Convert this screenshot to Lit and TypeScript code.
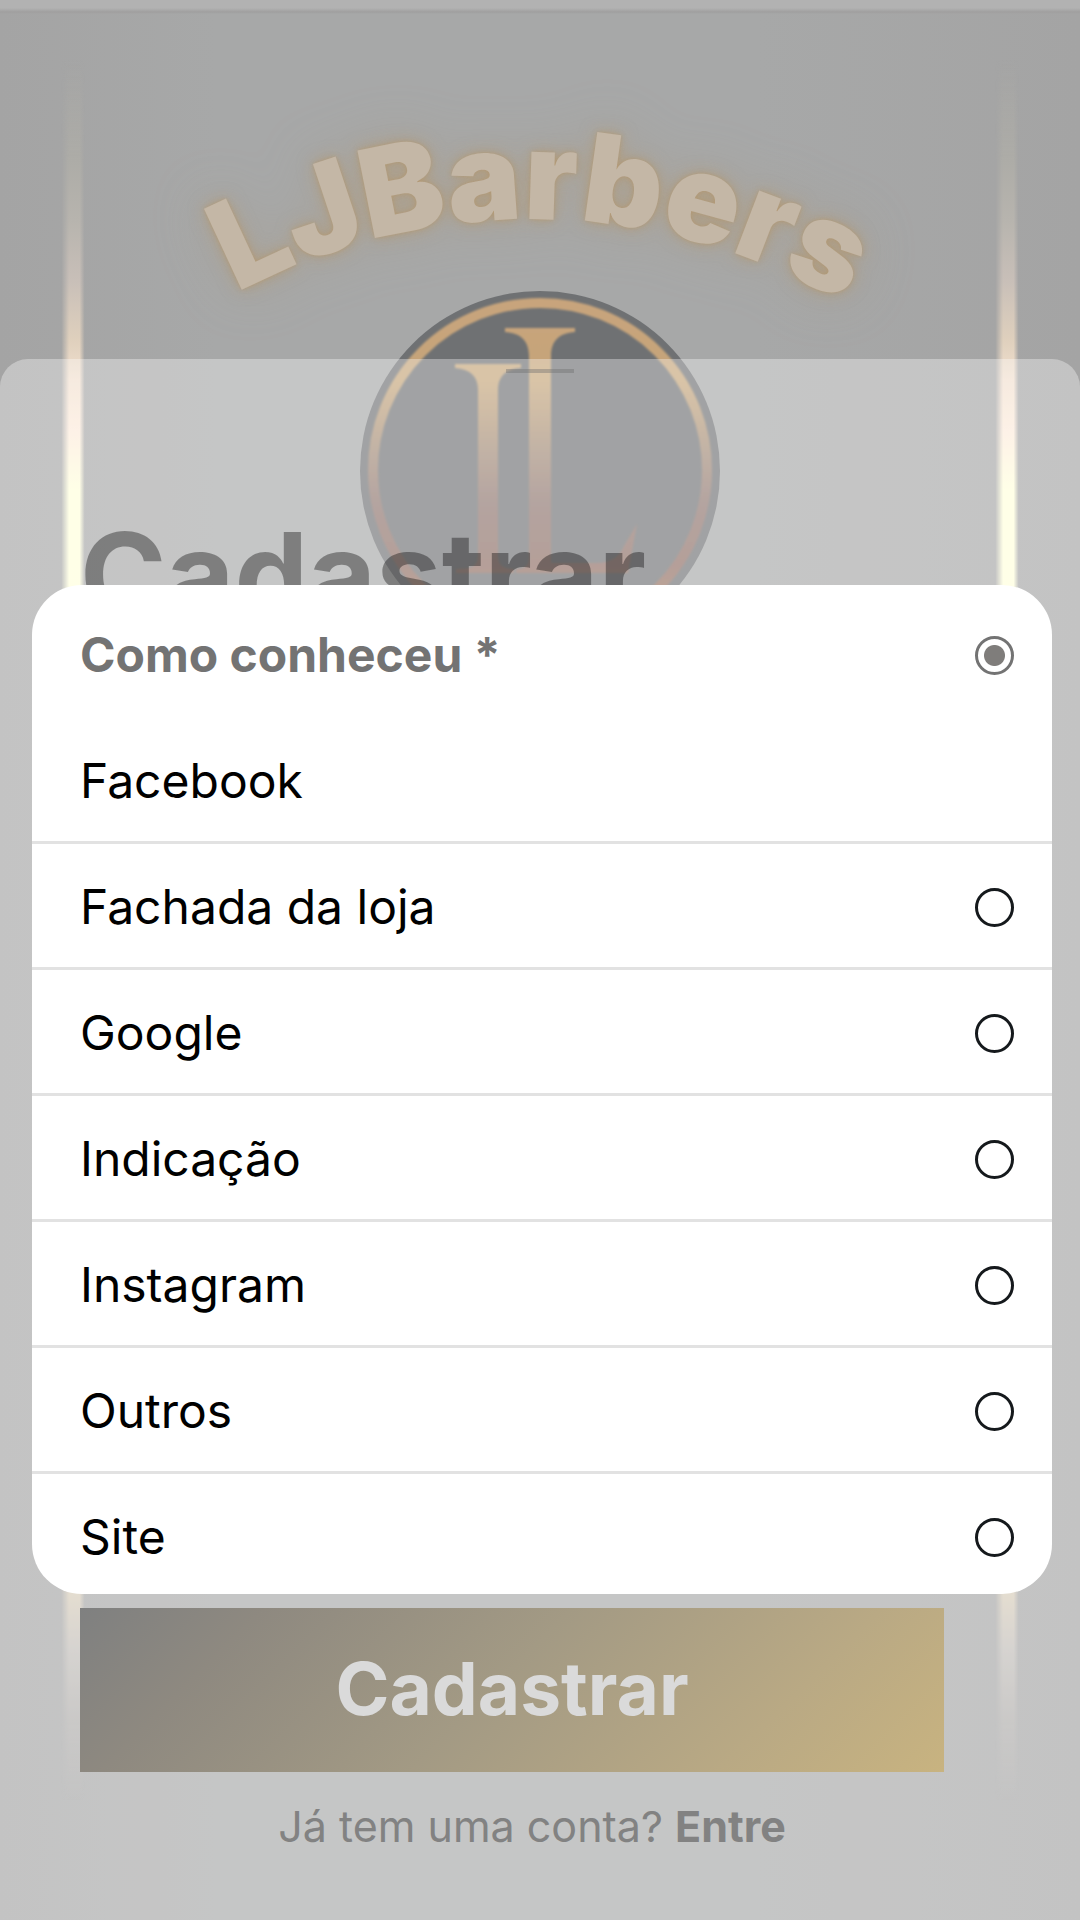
import { LitElement, html, css, svg } from "lit";
import { customElement, state } from "lit/decorators.js";

interface Option {
  id: string;
  label: string;
  radio: boolean;
}

const OPTIONS: Option[] = [
  { id: "facebook", label: "Facebook", radio: false },
  { id: "fachada", label: "Fachada da loja", radio: true },
  { id: "google", label: "Google", radio: true },
  { id: "indicacao", label: "Indicação", radio: true },
  { id: "instagram", label: "Instagram", radio: true },
  { id: "outros", label: "Outros", radio: true },
  { id: "site", label: "Site", radio: true },
];

@customElement("brand-mark")
export class BrandMark extends LitElement {
  static styles = css`
    :host {
      display: block;
    }
    .art {
      display: block;
      width: 100%;
      height: auto;
    }
    .name {
      font-family: "Inter", "Liberation Sans", sans-serif;
      font-weight: 900;
      font-size: 123px;
      fill: #c4b7a6;
      filter: drop-shadow(0 0 2px rgba(184, 147, 95, 0.5)) drop-shadow(0 0 8px rgba(184, 147, 95, 0.5))
        drop-shadow(0 0 26px rgba(172, 155, 130, 0.4));
    }
  `;

  render() {
    return html`
      <svg class="art" viewBox="0 0 1080 660" role="img" aria-label="LJBarbers">
        ${svg`
        <defs>
          <path id="arc" d="M237 293 A624 624 0 0 1 900 340" />
          <linearGradient id="copper" gradientUnits="userSpaceOnUse" x1="0" y1="300" x2="0" y2="640">
            <stop offset="0" stop-color="#c8a47c" />
            <stop offset="0.24" stop-color="#c5a579" />
            <stop offset="0.44" stop-color="#a28a75" />
            <stop offset="0.6" stop-color="#8c736d" />
            <stop offset="0.78" stop-color="#8e6c63" />
            <stop offset="1" stop-color="#a97a5c" />
          </linearGradient>
          <filter id="soft" x="-10%" y="-10%" width="120%" height="120%">
            <feGaussianBlur stdDeviation="0.8" />
          </filter>
        </defs>
        <text class="name"><textPath href="#arc">LJBarbers</textPath></text>
        <circle cx="540" cy="471" r="180" fill="#6f7173" />
        <g filter="url(#soft)">
          <circle cx="540" cy="470" r="167" fill="none" stroke="url(#copper)" stroke-width="10" />
          <path fill="url(#copper)" d="M505 328 H575 V332 C560 333 551 340 551 356 V563 H596 C612 563 620 556 624 546 L637 524 L628 573 H516 V569 C525 569 529 565 529 558 V356 C529 340 520 333 505 332 Z" />
          <path fill="url(#copper)" d="M455 364 H521 V368 C506 369 498 376 498 390 V556 C498 566 504 569 514 569 V573 H456 V569 C472 569 478 566 478 556 V390 C478 376 470 369 455 368 Z" />
        </g>
        `}
      </svg>
    `;
  }
}

@customElement("source-picker")
export class SourcePicker extends LitElement {
  static styles = css`
    :host {
      display: block;
      font-family: "Inter", "Liberation Sans", sans-serif;
    }
    .card {
      box-sizing: border-box;
      margin: 0;
      padding: 7px 0 0;
      border: 0;
      border-radius: 50px;
      background: #fff;
      overflow: hidden;
    }
    .row {
      display: flex;
      align-items: center;
      justify-content: space-between;
      box-sizing: border-box;
      padding: 30px 38px 30px 48px;
      font-size: 48px;
      line-height: 66px;
      color: #000;
    }
    .row.ruled {
      padding-bottom: 27px;
      border-bottom: 3px solid #e2e2e2;
    }
    .row:last-child {
      padding-bottom: 24px;
    }
    .row.heading {
      color: #737373;
      font-weight: 700;
    }
    .radio {
      appearance: none;
      box-sizing: border-box;
      flex: none;
      width: 39px;
      height: 39px;
      margin: 0;
      border: 3px solid #15191c;
      border-radius: 50%;
      background: #fff;
    }
    .radio.muted {
      border-color: #737373;
    }
    .radio:checked {
      background: radial-gradient(circle, #7f7d7b 10px, #fff 11px);
    }
  `;

  @state() private selected = "";

  render() {
    return html`
      <div class="card" role="radiogroup" aria-labelledby="question">
        <label class="row heading">
          <span id="question">Como conheceu *</span>
          <input
            class="radio muted"
            type="radio"
            name="source"
            .checked=${this.selected === ""}
            @change=${() => (this.selected = "")}
          />
        </label>
        ${OPTIONS.map(
          (o, i) => html`
            <label class="row ${i < OPTIONS.length - 1 ? "ruled" : ""}">
              <span>${o.label}</span>
              ${o.radio
                ? html`<input
                    class="radio"
                    type="radio"
                    name="source"
                    .checked=${this.selected === o.id}
                    @change=${() => (this.selected = o.id)}
                  />`
                : null}
            </label>
          `
        )}
      </div>
    `;
  }
}

@customElement("app-root")
export class AppRoot extends LitElement {
  static styles = css`
    :host {
      display: block;
      font-family: "Inter", "Liberation Sans", sans-serif;
    }
    .stage {
      display: grid;
      grid-template-columns: minmax(0, 1fr);
      min-height: 100vh;
      overflow: hidden;
      background:
        linear-gradient(#b2b2b2 0 8px, #a09f9f 12px, transparent 14px),
        linear-gradient(90deg, #a4a4a4, #a7a8a8 20%, #a7a8a8 70%, #a4a4a4);
    }
    .scene,
    .brand,
    .sheet,
    .picker {
      grid-area: 1 / 1;
    }
    .scene {
      display: flex;
      justify-content: space-between;
      padding: 0 60px;
    }
    .beam {
      width: 26px;
      background: linear-gradient(
        transparent 60px,
        #adaca7 160px,
        #b7b4ae 220px,
        #c8bfb8 280px,
        #dfd0bd 340px,
        #f1dfce 380px,
        #fceada 430px,
        #ffffda 490px,
        #ffffe4 1200px,
        #e8dcc8 1500px,
        #d6cbb7 1594px,
        #c0bcb7 1650px,
        #aeacaa 1720px,
        transparent 1800px
      );
      mask-image: linear-gradient(90deg, transparent 5%, #000 35%, #000 75%, transparent 95%);
    }
    .brand,
    .picker {
      align-self: start;
    }
    .sheet {
      z-index: 1;
      display: flex;
      flex-direction: column;
      align-items: stretch;
      box-sizing: border-box;
      margin-top: 359px;
      padding: 10px 136px 64px 80px;
      border-radius: 28px 28px 0 0;
      background: rgba(255, 255, 255, 0.35);
    }
    .handle {
      align-self: center;
      width: 68px;
      height: 4px;
      margin-left: 56px;
      background: rgba(110, 110, 110, 0.4);
    }
    .title {
      margin: 152px 0 0;
      font-size: 117px;
      line-height: 100px;
      font-weight: 700;
      color: rgba(0, 0, 0, 0.36);
    }
    .submit {
      margin-top: auto;
      height: 164px;
      border: 0;
      padding: 0 0 4px;
      background: linear-gradient(135deg, #7f8080, #8e8980 18%, #a39a84 48%, #b9a984 78%, #c8b380);
      color: #dadada;
      font-family: inherit;
      font-size: 73px;
      font-weight: 700;
    }
    .signin {
      margin: 24px 0 0;
      padding-left: 40px;
      text-align: center;
      font-size: 43px;
      line-height: 60px;
      color: #828282;
    }
    .link {
      color: inherit;
      font-weight: 700;
      text-decoration: none;
    }
    .picker {
      z-index: 2;
      margin: 585px 28px 0 32px;
    }
  `;

  render() {
    return html`
      <main class="stage">
        <div class="scene" aria-hidden="true">
          <div class="beam"></div>
          <div class="beam"></div>
        </div>
        <brand-mark class="brand"></brand-mark>
        <section class="sheet">
          <div class="handle"></div>
          <h1 class="title">Cadastrar</h1>
          <button class="submit" type="button">Cadastrar</button>
          <p class="signin">Já tem uma conta? <a class="link" href="#entrar">Entre</a></p>
        </section>
        <source-picker class="picker"></source-picker>
      </main>
    `;
  }
}
